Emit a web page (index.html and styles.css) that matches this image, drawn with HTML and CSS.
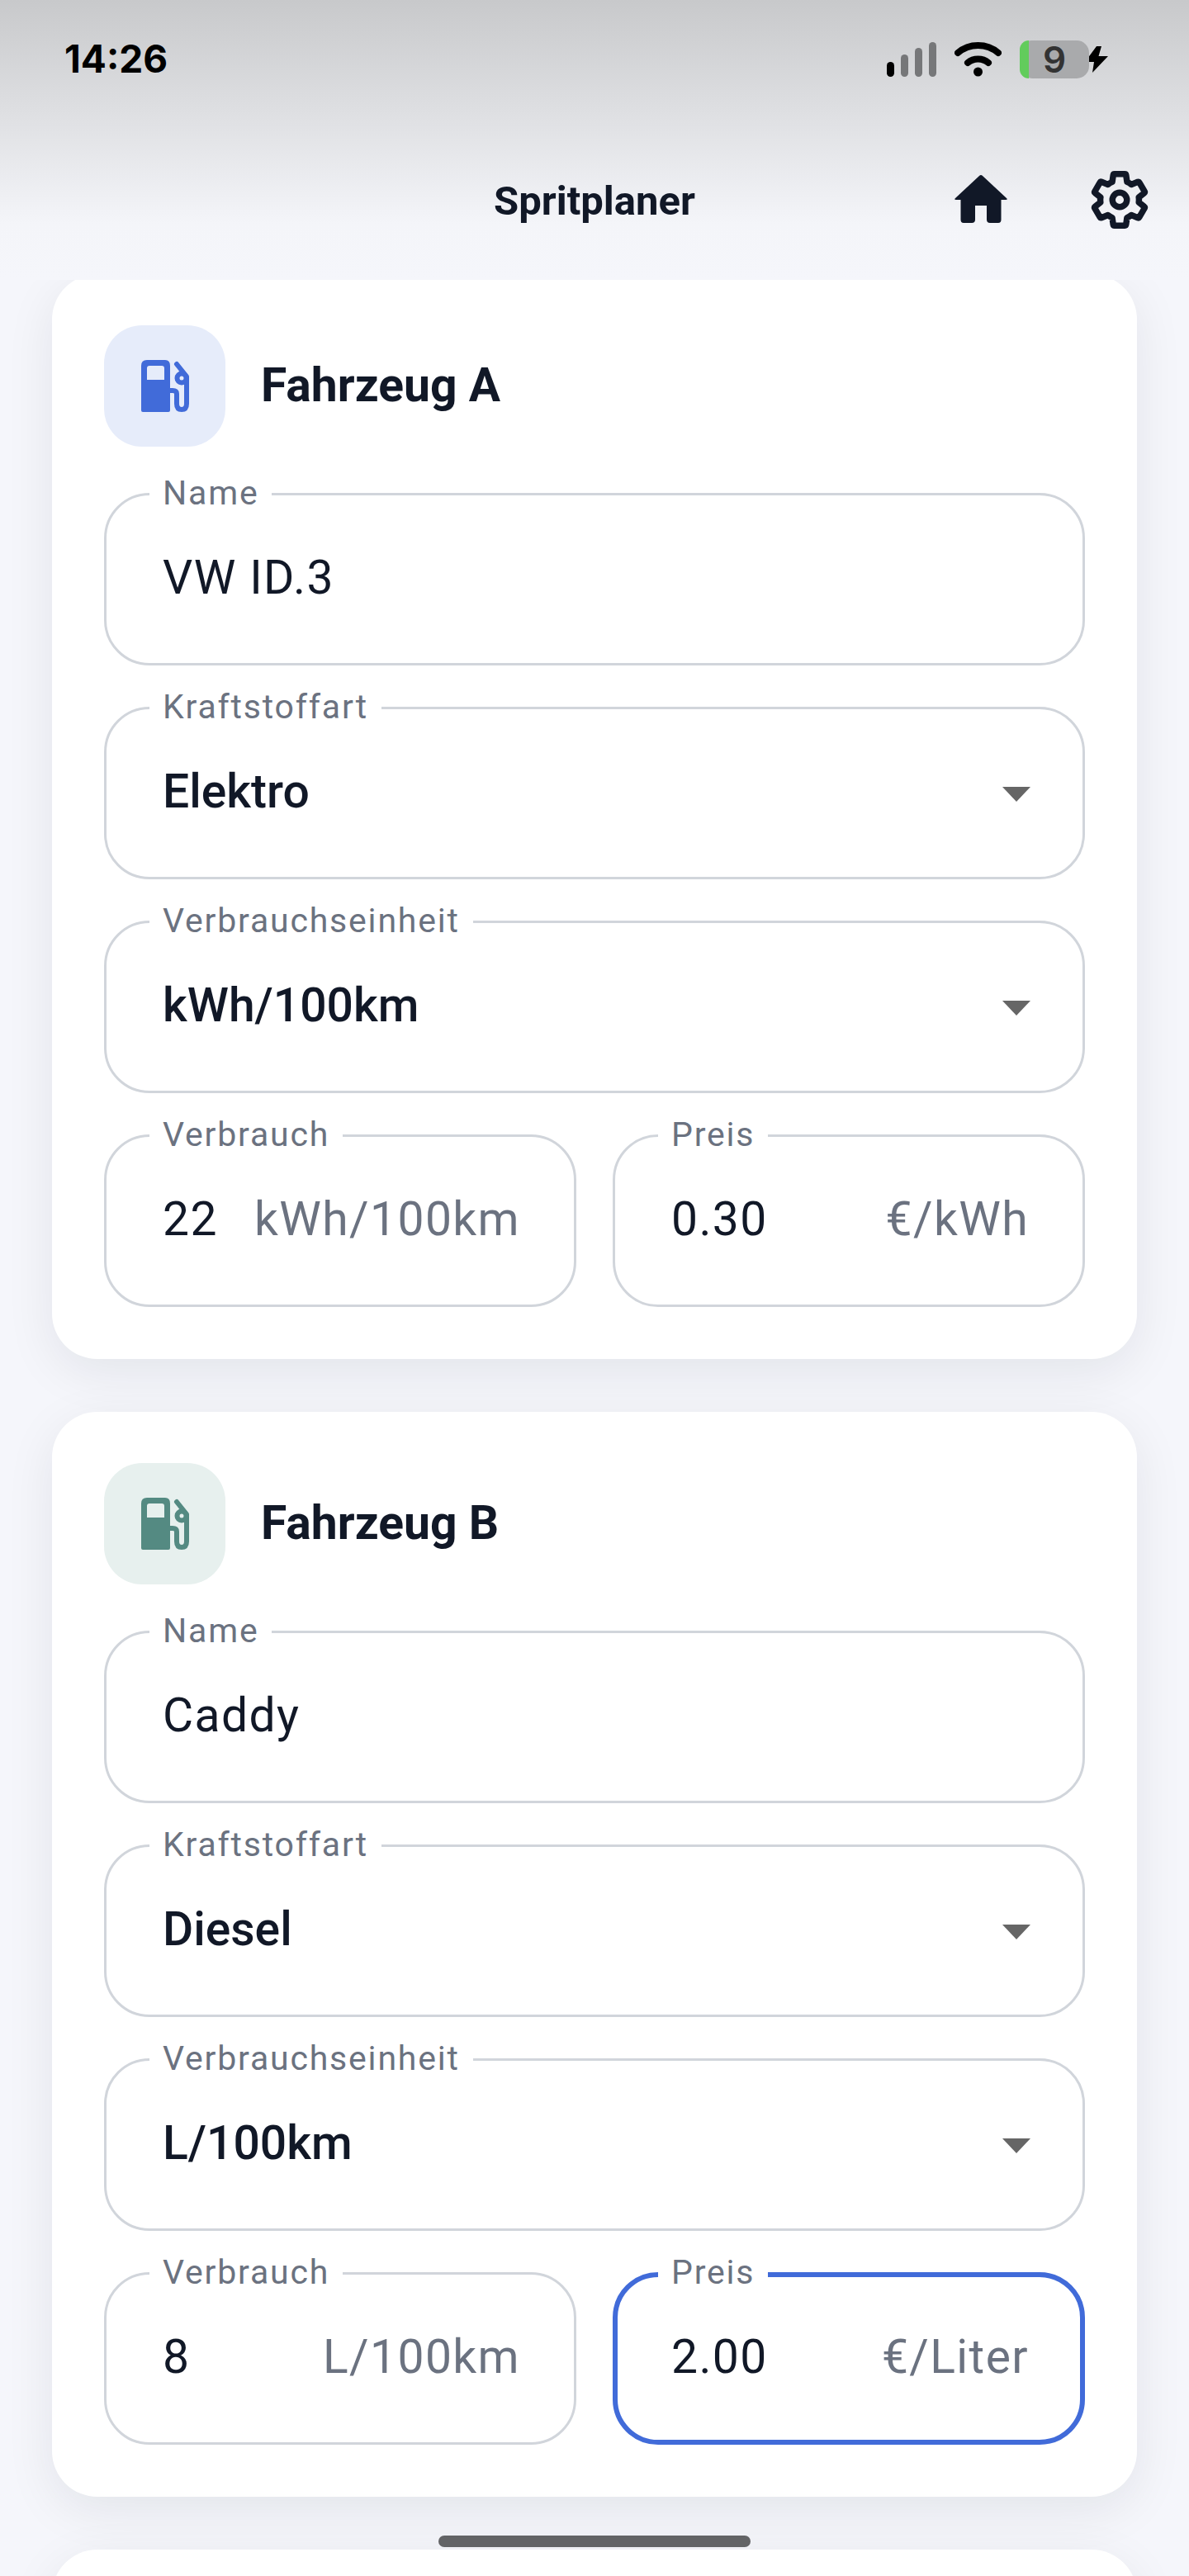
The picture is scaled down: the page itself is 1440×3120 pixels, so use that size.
FILE: index.html
```html
<!DOCTYPE html>
<html lang="de">
<head>
  <meta charset="UTF-8" />
  <meta name="viewport" content="width=device-width, initial-scale=1.0"/>
  <title>Spritplaner</title>
  <link rel="stylesheet" href="styles.css">
</head>
<body>

  <!-- Top bar with phone status -->
  <header class="topbar">
    <div class="status">
      <span class="time">14:26</span>
      <div class="status-icons">
        <div class="signal">
          <span class="bar on b1"></span>
          <span class="bar b2"></span>
          <span class="bar b3"></span>
          <span class="bar b4"></span>
        </div>
        <svg class="wifi" viewBox="0 0 57 42" fill="none" stroke="#000" stroke-width="8" stroke-linecap="round">
          <path d="M4 13C18 1 39 1 53 13"/>
          <path d="M16 25C23 19 34 19 41 25"/>
          <circle cx="28.5" cy="36" r="5.5" fill="#000" stroke="none"/>
        </svg>
        <div class="battery">
          <span class="battery-level"></span>
          <span class="battery-num">9</span>
        </div>
        <svg class="bolt" viewBox="0 0 28 32"><path d="M14 0L0 19H11L9 32L28 12H16.500L20 0Z"/></svg>
      </div>
    </div>
    <div class="appbar">
      <h1>Spritplaner</h1>
      <svg class="icon-home" viewBox="0 0 64 58"><path d="M30 1Q32 -1 34 1L63 28Q65 30 62 30H56.500V54Q56.500 58 53 58H43Q39 58 39 54V37H25V54Q25 58 21 58H11Q7.500 58 7.500 54V30H2Q-1 30 1 28Z"/></svg>
      <svg class="icon-gear" viewBox="0 0 24 24" fill="none" stroke="#111827" stroke-width="2.300" stroke-linejoin="round"><path d="M19.140 12.940c.04-.3.06-.61.06-.94 0-.32-.02-.64-.07-.94l2.030-1.580c.18-.14.23-.41.12-.61l-1.920-3.320c-.12-.22-.37-.29-.59-.22l-2.390.96c-.5-.38-1.030-.7-1.620-.94l-.36-2.540c-.04-.24-.24-.41-.48-.41h-3.840c-.24 0-.43.17-.47.41l-.36 2.540c-.59.24-1.130.57-1.620.94l-2.390-.96c-.22-.08-.47 0-.59.22L2.740 8.870c-.12.21-.08.47.12.61l2.030 1.580c-.05.3-.09.63-.09.94s.02.64.07.94l-2.030 1.580c-.18.14-.23.41-.12.61l1.920 3.320c.12.22.37.29.59.22l2.390-.96c.5.38 1.030.7 1.620.94l.36 2.540c.05.24.24.41.48.41h3.840c.24 0 .44-.17.47-.41l.36-2.540c.59-.24 1.130-.56 1.620-.94l2.390.96c.22.08.47 0 .59-.22l1.920-3.320c.12-.22.07-.47-.12-.61l-2.010-1.580z"/><circle cx="12" cy="12" r="2.700"/></svg>
    </div>
  </header>

  <main class="cards">

    <!-- Fahrzeug A -->
    <section class="card">
      <div class="card-head">
        <div class="pump pump-blue">
          <svg viewBox="0 0 58 63"><path fill-rule="evenodd" d="M7 0H29Q35 0 35 7V61Q35 63 33 63H2Q0 63 0 61V7Q0 0 7 0ZM10 7Q7 7 7 10V24H28V10Q28 7 25 7Z"/><path class="hose" d="M35 37H38Q43 37 43 41V53Q43 60 49 60Q55 60 55 53V20L43 5"/><circle class="hose" cx="49" cy="22" r="5.500"/></svg>
        </div>
        <h2>Fahrzeug A</h2>
      </div>
      <div class="fields">
        <div class="field">
          <label>Name</label>
          <span class="value">VW ID.3</span>
        </div>
        <div class="field select">
          <label>Kraftstoffart</label>
          <span class="value">Elektro</span>
          <span class="caret"></span>
        </div>
        <div class="field select">
          <label>Verbrauchseinheit</label>
          <span class="value">kWh/100km</span>
          <span class="caret"></span>
        </div>
        <div class="field-row">
          <div class="field">
            <label>Verbrauch</label>
            <span class="value">22</span>
            <span class="unit">kWh/100km</span>
          </div>
          <div class="field">
            <label>Preis</label>
            <span class="value">0.30</span>
            <span class="unit">€/kWh</span>
          </div>
        </div>
      </div>
    </section>

    <!-- Fahrzeug B -->
    <section class="card">
      <div class="card-head">
        <div class="pump pump-green">
          <svg viewBox="0 0 58 63"><path fill-rule="evenodd" d="M7 0H29Q35 0 35 7V61Q35 63 33 63H2Q0 63 0 61V7Q0 0 7 0ZM10 7Q7 7 7 10V24H28V10Q28 7 25 7Z"/><path class="hose" d="M35 37H38Q43 37 43 41V53Q43 60 49 60Q55 60 55 53V20L43 5"/><circle class="hose" cx="49" cy="22" r="5.500"/></svg>
        </div>
        <h2>Fahrzeug B</h2>
      </div>
      <div class="fields">
        <div class="field">
          <label>Name</label>
          <span class="value">Caddy</span>
        </div>
        <div class="field select">
          <label>Kraftstoffart</label>
          <span class="value">Diesel</span>
          <span class="caret"></span>
        </div>
        <div class="field select">
          <label>Verbrauchseinheit</label>
          <span class="value">L/100km</span>
          <span class="caret"></span>
        </div>
        <div class="field-row">
          <div class="field">
            <label>Verbrauch</label>
            <span class="value">8</span>
            <span class="unit">L/100km</span>
          </div>
          <div class="field focused">
            <label>Preis</label>
            <span class="value">2.00</span>
            <span class="unit">€/Liter</span>
          </div>
        </div>
      </div>
    </section>

    <!-- next card, only its top edge shows -->
    <section class="card card-next"></section>

  </main>

  <div class="home-indicator"></div>

</body>
</html>
```

FILE: styles.css
```css
* {
  box-sizing: border-box;
}

html, body {
  margin: 0;
  height: 3120px;
  overflow: hidden;
}

body {
  font-family: Roboto, "Noto Sans", sans-serif;
  background: #f5f6fb;
  color: #111827;
  display: flex;
  flex-direction: column;
}

/* top bar */
.topbar {
  position: relative;
  z-index: 2;
  height: 339px;
  flex: none;
  background: linear-gradient(to bottom, #c8c9cb 0%, #f4f5f9 80%, #f5f6fb 100%);
}

.status {
  display: flex;
  justify-content: space-between;
  padding: 49px 98px 0 78px;
  height: 200px;
}

.time {
  font-family: Inter, sans-serif;
  font-size: 46px;
  font-weight: 700;
  line-height: 44px;
  color: #000;
}

.status-icons {
  display: flex;
  align-items: flex-start;
}

.signal {
  display: flex;
  align-items: flex-end;
  gap: 8px;
  height: 44px;
  margin-right: 22px;
}

.bar {
  width: 9px;
  border-radius: 5px;
  background: #767779;
}

.bar.on { background: #000; }
.b1 { height: 18px; }
.b2 { height: 27px; }
.b3 { height: 35px; }
.b4 { height: 42px; }

.wifi {
  flex: none;
  width: 57px;
  height: 42px;
  margin: 2px 22px 0 0;
}

.battery {
  position: relative;
  flex: none;
  width: 84px;
  height: 46px;
  border-radius: 15px;
  background: #a9aaac;
  text-align: center;
  font-family: Inter, sans-serif;
  font-size: 44px;
  font-weight: 600;
  line-height: 46px;
  color: #333;
}

.battery-level {
  position: absolute;
  left: 0;
  top: 0;
  width: 11px;
  height: 100%;
  border-radius: 15px 0 0 15px;
  background: #62cc5c;
}

.battery-num {
  position: relative;
}

.bolt {
  flex: none;
  width: 28px;
  height: 32px;
  margin: 7px 0 0 -5px;
  fill: #000;
  stroke: #d5d6d8;
  stroke-width: 3;
  paint-order: stroke;
  overflow: visible;
}

.appbar {
  display: flex;
  align-items: center;
  height: 86px;
  position: relative;
}

.appbar h1 {
  margin: 0;
  width: 100%;
  text-align: center;
  font-size: 49px;
  font-weight: 700;
  color: #111827;
}

.icon-home {
  position: absolute;
  left: 1156px;
  top: 12px;
  width: 64px;
  height: 58px;
  fill: #111827;
}

.icon-gear {
  position: absolute;
  left: 1317px;
  top: 3px;
  width: 78px;
  height: 78px;
}

/* cards */
.cards {
  flex: 1;
  margin-top: -7px;
  padding: 0 63px;
  display: flex;
  flex-direction: column;
  gap: 64px;
}

.card {
  flex: none;
  background: #fff;
  border-radius: 55px;
  padding: 62px 63px 63px;
  box-shadow: 0 16px 60px rgba(17, 24, 39, 0.08);
}

.card-next {
  height: 300px;
}

.card-head {
  display: flex;
  align-items: center;
  gap: 44px;
  margin-bottom: 56px;
}

.card-head h2 {
  margin: -3px 0 0 -1px;
  font-size: 57px;
  font-weight: 700;
  color: #111827;
}

.pump {
  width: 147px;
  height: 147px;
  border-radius: 46px;
  display: flex;
  align-items: center;
  justify-content: center;
}

.pump svg {
  width: 58px;
  height: 63px;
}

.pump .hose {
  fill: none;
  stroke-width: 6;
  stroke-linecap: round;
  stroke-linejoin: round;
}

.pump-blue { background: #e6ecfa; }
.pump-blue svg { fill: #416bd9; }
.pump-blue .hose { stroke: #416bd9; }

.pump-green { background: #e7f0ee; }
.pump-green svg { fill: #548a82; }
.pump-green .hose { stroke: #548a82; }

/* fields */
.fields {
  display: flex;
  flex-direction: column;
  gap: 50px;
}

.field-row {
  display: flex;
  gap: 44px;
}

.field-row .field {
  flex: 1;
  min-width: 0;
}

.field {
  position: relative;
  height: 209px;
  padding: 0 65px 4px 68px;
  border: 3px solid #d1d5db;
  border-radius: 55px;
  display: flex;
  align-items: center;
  justify-content: space-between;
  font-size: 57px;
  letter-spacing: 1.400px;
}

.field label {
  position: absolute;
  left: 52px;
  top: -25px;
  padding: 0 16px;
  background: #fff;
  font-size: 41px;
  line-height: 44px;
  letter-spacing: 1.800px;
  color: #6b7280;
}

.value {
  color: #111827;
}

.select .value {
  font-weight: 500;
  letter-spacing: 0;
}

.unit {
  color: #6b7280;
}

.caret {
  width: 34px;
  height: 18px;
  background: #666;
  clip-path: polygon(0 0, 100% 0, 50% 100%);
  margin: 7px -2px 0 0;
}

.focused {
  border: 6px solid #416bd9;
  padding: 0 62px 4px 65px;
}

.focused label {
  left: 49px;
  top: -28px;
}

.home-indicator {
  position: absolute;
  z-index: 3;
  left: 531px;
  top: 3071px;
  width: 378px;
  height: 14px;
  border-radius: 7px;
  background: #636466;
}
```
